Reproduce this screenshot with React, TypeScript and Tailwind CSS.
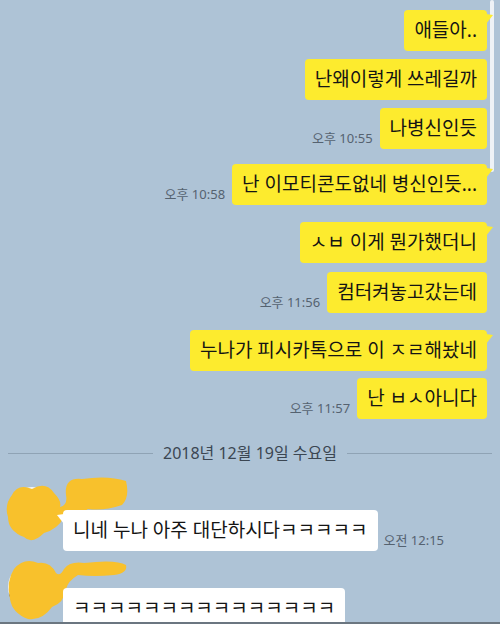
import React from "react";

type Mine = { text: string; time?: string; mt: number; tail?: boolean };

const mine: Mine[] = [
  { text: "애들아..", mt: 10, tail: true },
  { text: "난왜이렇게 쓰레길까", mt: 8 },
  { text: "나병신인듯", mt: 8, time: "오후 10:55" },
  { text: "난 이모티콘도없네 병신인듯...", mt: 15, tail: true, time: "오후 10:58" },
  { text: "ㅅㅂ 이게 뭔가했더니", mt: 17, tail: true },
  { text: "컴터켜놓고갔는데", mt: 9, time: "오후 11:56" },
  { text: "누나가 피시카톡으로 이 ㅈㄹ해놨네", mt: 17, tail: true },
  { text: "난 ㅂㅅ아니다", mt: 7, time: "오후 11:57" },
];

function Scribble({ variant }: { variant: number }) {
  // blurred-out profile picture + name
  return (
    <svg width="130" height="72" viewBox="0 0 130 72" className="shrink-0">
      <circle cx="30" cy="36" r="24" fill="#f4f6f8" />
      <path d="M7 42 Q9 56 24 60 L19 54 Q10 50 7 42Z" fill="#3a2f20" />
      <path
        d={
          variant === 0
            ? "M10 20 Q16 8 30 14 Q44 6 52 18 Q60 26 58 32 Q66 30 64 20 Q62 2 80 4 Q106 0 124 6 Q128 22 120 30 Q102 36 86 34 Q74 42 62 42 Q56 54 42 58 Q30 70 22 62 Q6 56 6 42 Q2 30 10 20Z"
            : "M12 18 Q22 6 36 12 Q48 10 54 22 Q58 26 62 18 Q68 10 82 12 Q114 8 124 14 Q126 22 112 24 Q92 26 76 24 Q66 30 64 38 Q62 52 50 56 Q40 70 26 68 Q10 62 8 48 Q4 30 12 18Z"
        }
        fill="#f8c12c"
      />
    </svg>
  );
}

export default function App() {
  return (
    <div
      className="relative w-[500px] h-[624px] overflow-hidden bg-[#aec3d6] border-b-2 border-[#6b7680]"
      style={{ fontFamily: "'Noto Sans', 'Noto Sans CJK KR', sans-serif" }}
    >
      {/* scrollbar */}
      <div className="absolute right-[6px] top-0 w-[4px] h-[172px] rounded-full bg-[#eef2f6]" />

      {/* my messages */}
      <div className="flex flex-col items-end pr-[13px]">
        {mine.map((m, i) => (
          <div key={i} className="flex items-end gap-[7px]" style={{ marginTop: m.mt }}>
            {m.time && <span className="text-[13px] text-[#556270] mb-[1px]">{m.time}</span>}
            <div className="relative h-[41px] px-[10px] flex items-center rounded-[4px] bg-[#fdeb2e] text-[19px] text-[#141414] whitespace-nowrap">
              {m.text}
              {m.tail && (
                <svg className="absolute -right-[6px] top-[4px]" width="7" height="10" viewBox="0 0 7 10">
                  <path d="M0 0 L7 1 L0 10Z" fill="#fdeb2e" />
                </svg>
              )}
            </div>
          </div>
        ))}
      </div>

      {/* date divider */}
      <div className="flex items-center gap-[10px] px-[8px] mt-[22px] text-[16px] text-[#3b4652]">
        <div className="flex-1 h-px bg-[#8fa3b5]" />
        <span>2018년 12월 19일 수요일</span>
        <div className="flex-1 h-px bg-[#8fa3b5]" />
      </div>

      {/* their messages */}
      <div className="relative mt-[10px]">
        <div className="absolute left-[2px] top-0">
          <Scribble variant={0} />
        </div>
        <div className="flex items-end gap-[6px] pl-[63px] pt-[35px]">
          <div className="relative h-[41px] px-[10px] flex items-center rounded-[4px] bg-white text-[19px] text-[#141414] whitespace-nowrap">
            니네 누나 아주 대단하시다ㅋㅋㅋㅋㅋ
            <svg className="absolute -left-[6px] top-[4px]" width="7" height="10" viewBox="0 0 7 10">
              <path d="M7 0 L0 1 L7 10Z" fill="#ffffff" />
            </svg>
          </div>
          <span className="text-[13px] text-[#556270] mb-[1px]">오전 12:15</span>
        </div>
      </div>

      <div className="relative mt-[10px]">
        <div className="absolute left-[2px] -top-[10px]">
          <Scribble variant={1} />
        </div>
        <div className="flex items-end gap-[6px] pl-[63px] pt-[27px]">
          <div className="relative h-[41px] px-[10px] flex items-center rounded-[4px] bg-white text-[19px] text-[#141414] whitespace-nowrap">
            ㅋㅋㅋㅋㅋㅋㅋㅋㅋㅋㅋㅋㅋㅋㅋ
          </div>
        </div>
      </div>
    </div>
  );
}
